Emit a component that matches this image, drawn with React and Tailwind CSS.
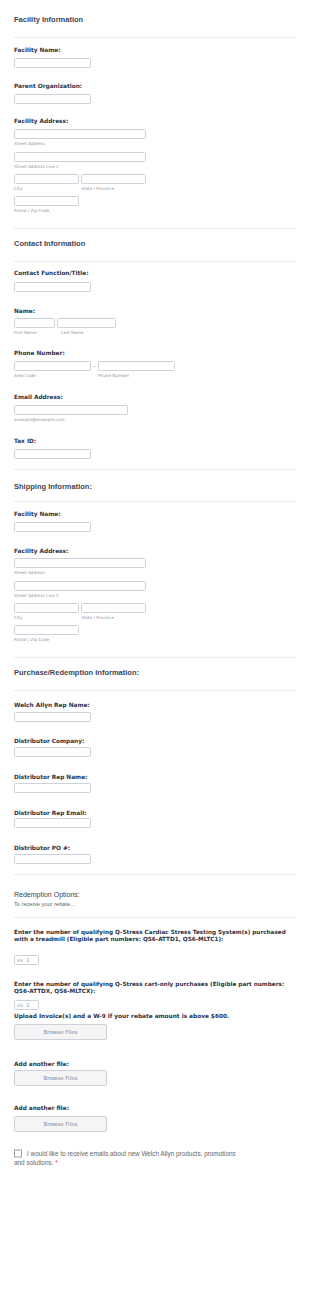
const lbl = "block h-[8px] leading-[8px] text-[5.8px] font-bold text-[#2c3345] font-['DejaVu_Sans',sans-serif] whitespace-nowrap"
const sub = "block h-[7px] leading-[7px] text-[4.2px] text-[#8f949e] font-['DejaVu_Sans',sans-serif] whitespace-nowrap"
const hdr = "block h-[10px] leading-[10px] text-[7.5px] font-bold text-[#3e4654] font-['Liberation_Sans',sans-serif] whitespace-nowrap"
const inp = "block h-[10px] border border-[#cdd2da] rounded-[1.5px] bg-white"
const rule = "h-px w-[281px] bg-[#ececec]"

function Box({ w, mt }) {
  return <div className={`${inp} ${w} ${mt}`} />
}

function Address({ mt }) {
  return (
    <>
      <div className={`${inp} w-[132px] ${mt}`} />
      <div className={`${sub} mt-[1px]`}>Street Address</div>
      <div className={`${inp} w-[132px] mt-[5px]`} />
      <div className={`${sub} mt-[1px]`}>Street Address Line 2</div>
      <div className="flex gap-[2px] mt-[4px]">
        <div>
          <div className={`${inp} w-[65px]`} />
          <div className={`${sub} mt-[1px]`}>City</div>
        </div>
        <div>
          <div className={`${inp} w-[65px]`} />
          <div className={`${sub} mt-[1px]`}>State / Province</div>
        </div>
      </div>
      <div className={`${inp} w-[65px] mt-[4px]`} />
      <div className={`${sub} mt-[1px]`}>Postal / Zip Code</div>
    </>
  )
}

function Upload({ label, mt, bmt }) {
  return (
    <>
      <div className={`${lbl} ${mt}`}>{label}</div>
      <button className={`${bmt} flex h-[16px] w-[93px] items-center justify-center rounded-[2px] border border-[#cdd2da] bg-[#f5f5f5] text-[5.5px] text-[#858a94] font-['DejaVu_Sans',sans-serif]`}>
        Browse Files
      </button>
    </>
  )
}

export default function App() {
  return (
    <div className="min-h-[1296px] w-[310px] bg-white">
      <div className="flex w-[295px] flex-col pl-[14px] pt-[15px]">
        <div className={hdr}>Facility Information</div>
        <div className={`${rule} mt-[12px]`} />
        <div className={`${lbl} mt-[8px]`}>Facility Name:</div>
        <Box w="w-[77px]" mt="mt-[4px]" />
        <div className={`${lbl} mt-[14px]`}>Parent Organization:</div>
        <Box w="w-[77px]" mt="mt-[4px]" />
        <div className={`${lbl} mt-[13px]`}>Facility Address:</div>
        <Address mt="mt-[4px]" />
        <div className={`${rule} mt-[14px]`} />

        <div className={`${hdr} mt-[10px]`}>Contact Information</div>
        <div className={`${rule} mt-[12px]`} />
        <div className={`${lbl} mt-[7px]`}>Contact Function/Title:</div>
        <Box w="w-[77px]" mt="mt-[5px]" />
        <div className={`${lbl} mt-[15px]`}>Name:</div>
        <div className="mt-[3px] flex gap-[2px]">
          <div>
            <div className={`${inp} w-[41px]`} />
            <div className={`${sub} mt-[1px]`}>First Name</div>
          </div>
          <div>
            <div className={`${inp} w-[59px]`} />
            <div className={`${sub} mt-[1px] pl-[4px]`}>Last Name</div>
          </div>
        </div>
        <div className={`${lbl} mt-[13px]`}>Phone Number:</div>
        <div className="mt-[4px] flex">
          <div>
            <div className={`${inp} w-[77px]`} />
            <div className={`${sub} mt-[1px]`}>Area Code</div>
          </div>
          <div className="w-[7px] text-center text-[6px] leading-[10px] text-[#666] font-['DejaVu_Sans',sans-serif]">-</div>
          <div>
            <div className={`${inp} w-[77px]`} />
            <div className={`${sub} mt-[1px]`}>Phone Number</div>
          </div>
        </div>
        <div className={`${lbl} mt-[14px]`}>Email Address:</div>
        <Box w="w-[114px]" mt="mt-[4px]" />
        <div className={`${sub} mt-[1px]`}>example@example.com</div>
        <div className={`${lbl} mt-[14px]`}>Tax ID:</div>
        <Box w="w-[77px]" mt="mt-[4px]" />
        <div className={`${rule} mt-[10px]`} />

        <div className={`${hdr} mt-[12px]`}>Shipping Information:</div>
        <div className={`${rule} mt-[9px]`} />
        <div className={`${lbl} mt-[8px]`}>Facility Name:</div>
        <Box w="w-[77px]" mt="mt-[4px]" />
        <div className={`${lbl} mt-[15px]`}>Facility Address:</div>
        <Address mt="mt-[3px]" />
        <div className={`${rule} mt-[14px]`} />

        <div className={`${hdr} mt-[10px]`}>Purchase/Redemption Information:</div>
        <div className={`${rule} mt-[12px]`} />
        <div className={`${lbl} mt-[10px]`}>Welch Allyn Rep Name:</div>
        <Box w="w-[77px]" mt="mt-[3px]" />
        <div className={`${lbl} mt-[15px]`}>Distributor Company:</div>
        <Box w="w-[77px]" mt="mt-[2px]" />
        <div className={`${lbl} mt-[16px]`}>Distributor Rep Name:</div>
        <Box w="w-[77px]" mt="mt-[2px]" />
        <div className={`${lbl} mt-[16px]`}>Distributor Rep Email:</div>
        <Box w="w-[77px]" mt="mt-[1px]" />
        <div className={`${lbl} mt-[16px]`}>Distributor PO #:</div>
        <Box w="w-[77px]" mt="mt-[2px]" />
        <div className={`${rule} mt-[10px]`} />

        <div className="mt-[15px] h-[10px] whitespace-nowrap font-['Liberation_Sans',sans-serif] text-[7px] leading-[10px] text-[#3a3f4a]">
          Redemption Options:
        </div>
        <div className="mt-[1px] h-[7px] whitespace-nowrap font-['Liberation_Sans',sans-serif] text-[5.7px] leading-[7px] text-[#666]">
          To receive your rebate...
        </div>
        <div className={`${rule} mt-[9px]`} />

        <div className="mt-[11px] font-['DejaVu_Sans',sans-serif] text-[5.7px] font-bold leading-[7px] text-[#2c3345]">
          Enter the number of qualifying Q-Stress Cardiac Stress Testing System(s) purchased with a treadmill (Eligible part numbers: QS6-ATTD1, QS6-MLTC1):
        </div>
        <input
          readOnly
          placeholder="ex: 2"
          className={`${inp} mt-[12px] w-[25px] px-[2px] font-['DejaVu_Sans',sans-serif] text-[5px] placeholder:text-[#9a9fa8]`}
        />
        <div className="mt-[16px] font-['DejaVu_Sans',sans-serif] text-[5.7px] font-bold leading-[7px] text-[#2c3345]">
          Enter the number of qualifying Q-Stress cart-only purchases (Eligible part numbers: QS6-ATTDX, QS6-MLTCX):
        </div>
        <input
          readOnly
          placeholder="ex: 2"
          className={`${inp} mt-[5px] w-[25px] px-[2px] font-['DejaVu_Sans',sans-serif] text-[5px] placeholder:text-[#9a9fa8]`}
        />

        <Upload label="Upload Invoice(s) and a W-9 if your rebate amount is above $600." mt="mt-[2px]" bmt="mt-[4px]" />
        <Upload label="Add another file:" mt="mt-[20px]" bmt="mt-[2px]" />
        <Upload label="Add another file:" mt="mt-[18px]" bmt="mt-[4px]" />

        <div className="mt-[16px] w-[226px] font-['Liberation_Sans',sans-serif] text-[6.4px] leading-[9px] text-[#666]">
          <span className="mr-[5px] inline-block h-[8px] w-[8px] translate-y-[1.5px] border border-[#9aa0aa] bg-white align-baseline" />
          I would like to receive emails about new Welch Allyn products, promotions and solutions. <span className="text-[#e53935]">*</span>
        </div>
      </div>
    </div>
  )
}
